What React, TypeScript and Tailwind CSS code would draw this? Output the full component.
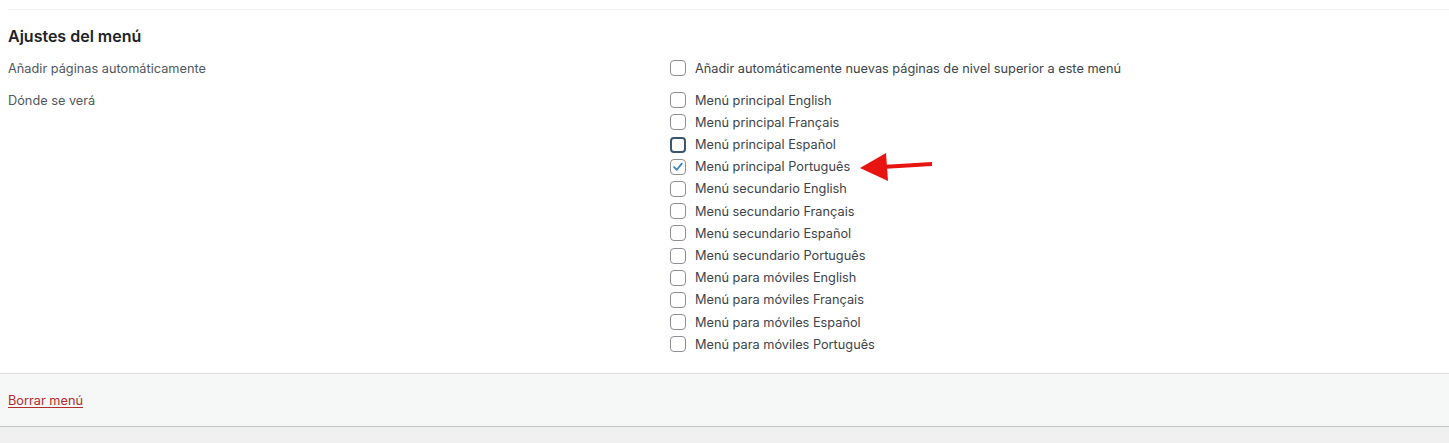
import React from 'react';

const locations = [
  'Menú principal English',
  'Menú principal Français',
  'Menú principal Español',
  'Menú principal Português',
  'Menú secundario English',
  'Menú secundario Français',
  'Menú secundario Español',
  'Menú secundario Português',
  'Menú para móviles English',
  'Menú para móviles Français',
  'Menú para móviles Español',
  'Menú para móviles Português',
];

const Checkbox = ({ checked, focused }: { checked?: boolean; focused?: boolean }) => (
  <span
    className={`flex h-4 w-4 shrink-0 items-center justify-center rounded-[4px] bg-white ${
      focused ? 'border-2 border-[#3b5670]' : 'border border-[#8c8f94]'
    }`}
  >
    {checked && (
      <svg viewBox="0 0 16 16" className="h-[14px] w-[14px]">
        <path d="M3.5 8.2 L6.6 11.2 L12.4 4.2" fill="none" stroke="#3582c4" strokeWidth="2" strokeLinecap="round" strokeLinejoin="round" />
      </svg>
    )}
  </span>
);

const Row = ({ label, checked, focused }: { label: string; checked?: boolean; focused?: boolean }) => (
  <label className="flex h-[22.2px] items-center gap-[9px]">
    <Checkbox checked={checked} focused={focused} />
    <span>{label}</span>
  </label>
);

export default function App() {
  return (
    <div className="relative h-[443px] w-full overflow-hidden bg-[#f0f0f1] font-['Inter','Liberation_Sans',sans-serif] text-[12.75px] text-[#3c434a]">
      <div className="bg-white pl-2 pt-[9px]">
        <div className="border-t border-[#f0f0f1]" />
        <h3 className="mt-4 text-[16px] font-semibold leading-5 text-[#1d2327]">Ajustes del menú</h3>

        <div className="mt-[11px] grid grid-cols-[662px_1fr]">
          <div className="flex h-[22.2px] items-center text-[#50575e]">Añadir páginas automáticamente</div>
          <Row label="Añadir automáticamente nuevas páginas de nivel superior a este menú" />
        </div>

        <div className="mt-[10px] grid grid-cols-[662px_1fr] pb-[18px]">
          <div className="flex h-[22.2px] items-center text-[#50575e]">Dónde se verá</div>
          <div className="flex flex-col">
            {locations.map((l, i) => (
              <Row key={i} label={l} checked={i === 3} focused={i === 2} />
            ))}
          </div>
        </div>
      </div>

      <div className="flex h-[54px] items-center border-y border-t-[#dcdcde] border-b-[#c3c4c7] bg-[#f6f7f7] pl-2">
        <a href="#" className="text-[#b32d2e] underline underline-offset-2">Borrar menú</a>
      </div>

      <svg className="absolute left-[856px] top-[151px]" width="80" height="32" viewBox="0 0 80 32">
        <path d="M26 14 L76 11 L76 15 L26 18 Z" fill="#e8140f" />
        <path d="M4 17 L30 2 L32 30 Z" fill="#e8140f" />
      </svg>
    </div>
  );
}
